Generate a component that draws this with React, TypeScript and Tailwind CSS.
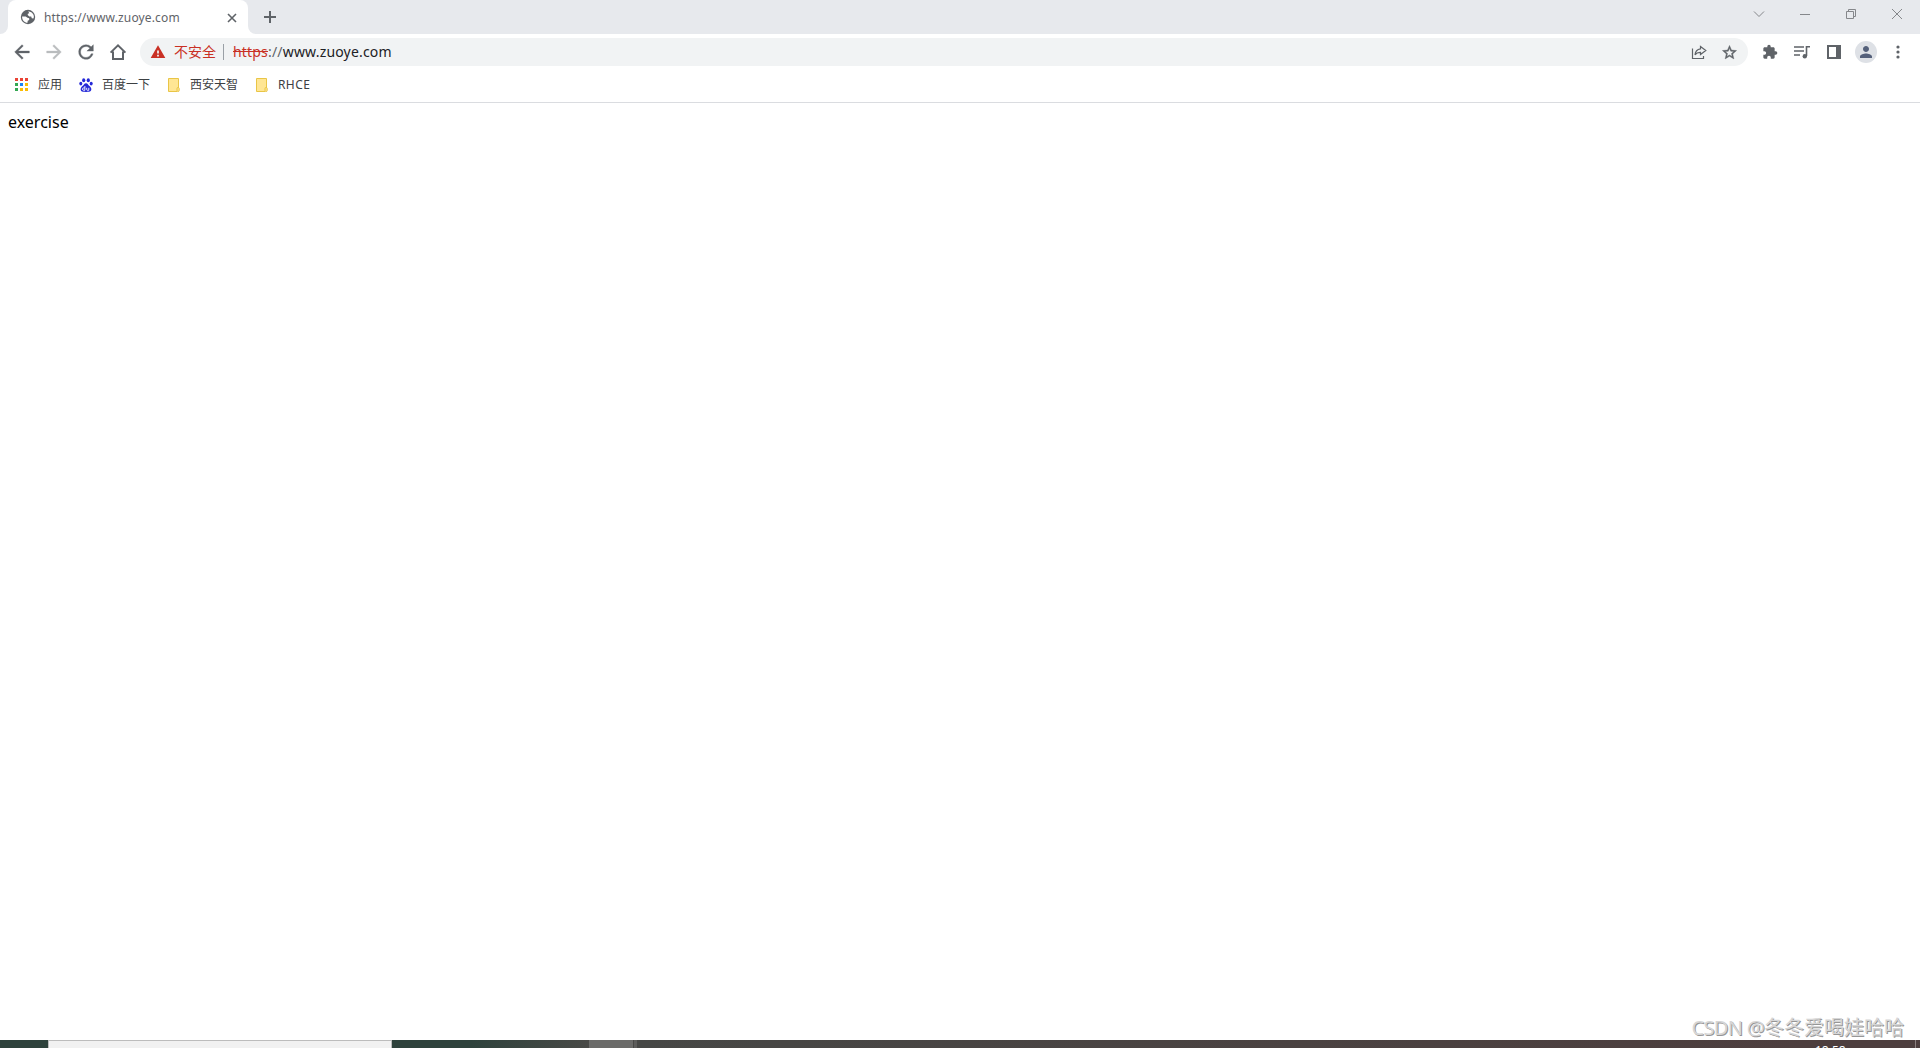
import type { FC, ReactNode } from 'react'

const Icon: FC<{ d: string; className: string }> = ({ d, className }) => (
    <svg viewBox="0 0 24 24" fill="currentColor" className={`shrink-0 ${className}`}>
        <path d={d} />
    </svg>
)

const BACK = 'M20 11H7.83l5.59-5.59L12 4l-8 8 8 8 1.41-1.41L7.83 13H20v-2z'
const FORWARD = 'M12 4l-1.41 1.41L16.17 11H4v2h12.17l-5.58 5.59L12 20l8-8z'
const RELOAD = 'M17.65 6.35A7.958 7.958 0 0 0 12 4a8 8 0 1 0 7.73 10h-2.08A5.99 5.99 0 0 1 12 18a6 6 0 1 1 0-12c1.66 0 3.14.69 4.22 1.78L13 11h7V4l-2.35 2.35z'
const WARNING = 'M1 21h22L12 2 1 21zm12.3-2.4h-2.6v-2.4h2.6v2.4zm0-4.4h-2.6V9.6h2.6v4.6z'
const STAR = 'M22 9.24l-7.19-.62L12 2 9.19 8.63 2 9.24l5.46 4.73L5.82 21 12 17.27 18.18 21l-1.63-7.03L22 9.24zM12 15.4l-3.76 2.27 1-4.28-3.32-2.88 4.38-.38L12 6.1l1.71 4.04 4.38.38-3.32 2.88 1 4.28L12 15.4z'
const PUZZLE = 'M20.5 11H19V7c0-1.1-.9-2-2-2h-4V3.5a2.5 2.5 0 0 0-5 0V5H4c-1.1 0-1.99.9-1.99 2v3.8H3.5c1.49 0 2.7 1.21 2.7 2.7s-1.21 2.7-2.7 2.7H2V20c0 1.1.9 2 2 2h3.8v-1.5c0-1.49 1.21-2.7 2.7-2.7s2.7 1.21 2.7 2.7V22H17c1.1 0 2-.9 2-2v-4h1.5a2.5 2.5 0 0 0 0-5z'
const PERSON = 'M12 12c2.21 0 4-1.79 4-4s-1.79-4-4-4-4 1.79-4 4 1.79 4 4 4zm0 2c-2.67 0-8 1.34-8 4v2h16v-2c0-2.66-5.33-4-8-4z'

const appDots = [
    'bg-[#ea4335]', 'bg-[#ea4335]', 'bg-[#ea4335]',
    'bg-[#34a853]', 'bg-[#1a83f8]', 'bg-[#fbbc04]',
    'bg-[#34a853]', 'bg-[#fbbc04]', 'bg-[#fbbc04]',
]

const Globe: FC = () => (
    <svg viewBox="0 0 16 16" className="ml-px h-4 w-4 shrink-0">
        <circle cx="8" cy="8" r="7.2" fill="#5f6368" />
        <path d="M8.3 2.3l3 .9c1.6 1 2.6 2.8 2.6 4.7l-.5 1.7-1.6-.4-.6-1.6-1.9-.2-1.6-1.3.1-1.3 1.4-.5z" fill="#fff" />
        <path d="M2.1 7.4l3.6.2 1.8 1.1 1.7.5v1.7l-1.5.9-.2 1.9C4.6 13.6 2 11.3 2.1 7.4z" fill="#fff" />
    </svg>
)

const Folder: FC = () => (
    <svg viewBox="0 0 14 16" className="h-4 w-3.5 shrink-0">
        <path d="M1.5 1.5h10v9.5M10 14.5H1.5v-13" fill="#ffe694" stroke="#e9c546" />
        <path d="M2 2h9v12H2z" fill="#ffe694" />
        <rect x="10" y="10.5" width="2.2" height="4" rx="1" fill="#ffe694" stroke="#e9c546" />
    </svg>
)

const Paw: FC = () => (
    <svg viewBox="0 0 14 14" className="h-3.5 w-3.5 shrink-0" fill="#2529d8">
        <ellipse cx="4.7" cy="2.2" rx="1.6" ry="2" />
        <ellipse cx="9.3" cy="2.2" rx="1.6" ry="2" />
        <ellipse cx="1.8" cy="5.6" rx="1.5" ry="1.9" />
        <ellipse cx="12.2" cy="5.6" rx="1.5" ry="1.9" />
        <path d="M7 5.3c-1.8 0-2.1 1.7-3.5 2.8C1 10 .9 13.6 4 13.8c1.5.1 4.5.1 6 0 3.1-.2 3-3.8.5-5.7C9.1 7 8.8 5.3 7 5.3z" />
        <path d="M5.9 8v4.3H4.7a1.2 1.2 0 1 1 0-2.4h1.2M7.7 9.8v1.8q0 .7.7.7h1.4V9.8" fill="none" stroke="#fff" strokeWidth=".9" />
    </svg>
)

const Bookmark: FC<{ icon: ReactNode; label: string; className: string }> = ({ icon, label, className }) => (
    <div className={`flex h-full shrink-0 items-center ${className}`}>
        {icon}
        <span className="whitespace-nowrap">{label}</span>
    </div>
)

const TabStrip: FC = () => (
    <div className="flex h-[34px] shrink-0 items-center bg-[#e7e9ed] text-[#5f6368]">
        <div className="h-full w-2 bg-white">
            <div className="h-full rounded-br-lg bg-[#e7e9ed]" />
        </div>
        <div className="h-full w-60 bg-[#e7e9ed]">
            <div className="flex h-full items-center rounded-t-lg bg-white pl-[11px] pr-2.5">
                <Globe />
                <span className="ml-2 mt-0.5 flex-1 whitespace-nowrap text-[12px] tracking-[0.14px]">https://www.zuoye.com</span>
                <svg viewBox="0 0 12 12" className="mt-px h-3 w-3" stroke="currentColor" strokeWidth="1.6">
                    <path d="M2 2l8 8M10 2l-8 8" />
                </svg>
            </div>
        </div>
        <div className="h-full w-2 bg-white">
            <div className="h-full rounded-bl-lg bg-[#e7e9ed]" />
        </div>
        <svg viewBox="0 0 12 12" className="ml-2 h-3 w-3" stroke="currentColor" strokeWidth="2">
            <path d="M6 0v12M0 6h12" />
        </svg>
        <div className="mb-1.5 ml-auto mr-[17px] flex items-center gap-[34px] text-[#85878b]">
            <svg viewBox="0 0 12 12" className="h-3 w-3" fill="none" stroke="currentColor">
                <path d="M1 3.5l5 5 5-5" />
            </svg>
            <svg viewBox="0 0 12 12" className="h-3 w-3" stroke="currentColor">
                <path d="M1 6.5h10" />
            </svg>
            <svg viewBox="0 0 12 12" className="h-3 w-3" fill="none" stroke="currentColor">
                <path d="M1.5 3.5h7v7h-7zM3.5 3.5v-2h7v7h-2" />
            </svg>
            <svg viewBox="0 0 12 12" className="h-3 w-3" stroke="currentColor">
                <path d="M1 1l10 10M11 1L1 11" />
            </svg>
        </div>
    </div>
)

const Toolbar: FC = () => (
    <div className="flex h-9 shrink-0 items-center pl-[11px] text-[#5f6368]">
        <Icon d={BACK} className="h-[22px] w-[22px] stroke-current stroke-[0.4]" />
        <Icon d={FORWARD} className="ml-2.5 h-[22px] w-[22px] stroke-current stroke-[0.4] text-[#babcbe]" />
        <Icon d={RELOAD} className="ml-2.5 h-[22px] w-[22px] stroke-current stroke-[0.4]" />
        <svg viewBox="0 0 18 18" className="ml-3 h-[18px] w-[18px]" fill="none" stroke="currentColor" strokeWidth="2">
            <path d="M1.6 9.6L9 2.4l7.4 7.2M4 8.5V16h10V8.5" />
        </svg>
        <div className="ml-[13px] flex h-7 w-[1608px] items-center rounded-full bg-[#f1f3f4] pl-2.5 pr-2.5">
            <Icon d={WARNING} className="h-4 w-4 text-[#c93024]" />
            <span className="ml-2 text-[14px] leading-5 text-[#c93024]">不安全</span>
            <span className="ml-[7px] mr-[9px] h-4 w-px bg-[#9aa0a6]" />
            <span className="whitespace-nowrap text-[14px] leading-5 tracking-[0.18px] text-[#202124]">
                <span className="text-[#c93024] line-through">https</span>
                <span className="text-[#5f6368]">://</span>www.zuoye.com
            </span>
            <svg viewBox="0 0 16 16" className="ml-auto h-4 w-4" fill="none" stroke="currentColor" strokeWidth="1.2">
                <path d="M1.5 4.5v10h11V12" />
                <path d="M9.5 2.5l5.3 4-5.3 4V8.3C7 8.2 5.2 9 4 10.8c.3-3.4 2.3-5.6 5.5-6z" />
            </svg>
            <Icon d={STAR} className="ml-3.5 h-[17px] w-[17px] stroke-current stroke-[0.6]" />
        </div>
        <Icon d={PUZZLE} className="ml-3.5 h-4 w-4" />
        <svg viewBox="0 0 16 16" className="ml-4 h-4 w-4" fill="none" stroke="currentColor" strokeWidth="1.6">
            <path d="M0 3h10M0 7h10M0 11h6" />
            <path d="M12.5 12V2.8H16" />
            <circle cx="10.8" cy="12.2" r="2.2" fill="currentColor" stroke="none" />
        </svg>
        <svg viewBox="0 0 14 14" className="ml-[17px] h-3.5 w-3.5" fill="currentColor">
            <path d="M0 0h14v14H0zM2 2v10h7V2z" fillRule="evenodd" />
        </svg>
        <div className="ml-3.5 flex h-[22px] w-[22px] items-center justify-center rounded-full bg-[#dee1e6]">
            <Icon d={PERSON} className="h-[18px] w-[18px] text-[#54607a]" />
        </div>
        <svg viewBox="0 0 4 14" className="ml-[19px] h-3.5 w-1" fill="currentColor">
            <circle cx="2" cy="2" r="1.6" />
            <circle cx="2" cy="7" r="1.6" />
            <circle cx="2" cy="12" r="1.6" />
        </svg>
    </div>
)

const BookmarksBar: FC = () => (
    <div className="flex h-[33px] shrink-0 items-center border-b border-[#dadce0] pb-0.5 pl-[15px] text-[12px] text-[#3c4043]">
        <Bookmark
            className="w-16 gap-2.5"
            label="应用"
            icon={
                <div className="mb-0.5 grid shrink-0 grid-cols-3 gap-0.5">
                    {appDots.map((color, i) => (
                        <span key={i} className={`h-[3px] w-[3px] ${color}`} />
                    ))}
                </div>
            }
        />
        <Bookmark className="w-[88px] gap-[9px]" label="百度一下" icon={<Paw />} />
        <Bookmark className="w-[88px] gap-[9px]" label="西安天智" icon={<Folder />} />
        <Bookmark className="gap-[9px] tracking-[0.4px]" label="RHCE" icon={<Folder />} />
    </div>
)

const Taskbar: FC = () => (
    <div className="flex h-2 shrink-0 overflow-hidden bg-[#4d3e3e]">
        <div className="w-12 bg-[#2e423c]" />
        <div className="w-[344px] border border-b-0 border-[#bcbcbc] bg-[#f1f1f1]" />
        <div className="w-[197px] bg-linear-to-r from-[#2e423c] from-40% to-[#484946]" />
        <div className="w-11 bg-[#6b6b69]" />
        <div className="w-1 border-l border-[#484846] bg-[#5c5c5a]" />
        <div className="flex-1 bg-linear-to-r from-[#464745] to-[#4d3e3e]" />
        <span className="w-[100px] pt-[3px] text-[12px] leading-4 text-white">18:58</span>
        <div className="w-[5px] border-l border-[#8b8080]" />
    </div>
)

export default function App() {
    return (
        <div className="flex h-[1048px] w-[1920px] flex-col overflow-hidden bg-white font-['Noto_Sans','Noto_Sans_CJK_SC',sans-serif]">
            <TabStrip />
            <Toolbar />
            <BookmarksBar />
            <main className="flex min-h-0 flex-1 flex-col justify-between">
                <p className="pl-2 pt-[7px] text-[16px] leading-6 text-black">exercise</p>
                <p className="self-end pr-4 text-[20px] leading-6 text-[#d6d6d6] [text-shadow:1px_1px_0_#969696]">
                    <span className="tracking-[-0.7px]">CSDN @</span>冬冬爱喝娃哈哈
                </p>
            </main>
            <Taskbar />
        </div>
    )
}
